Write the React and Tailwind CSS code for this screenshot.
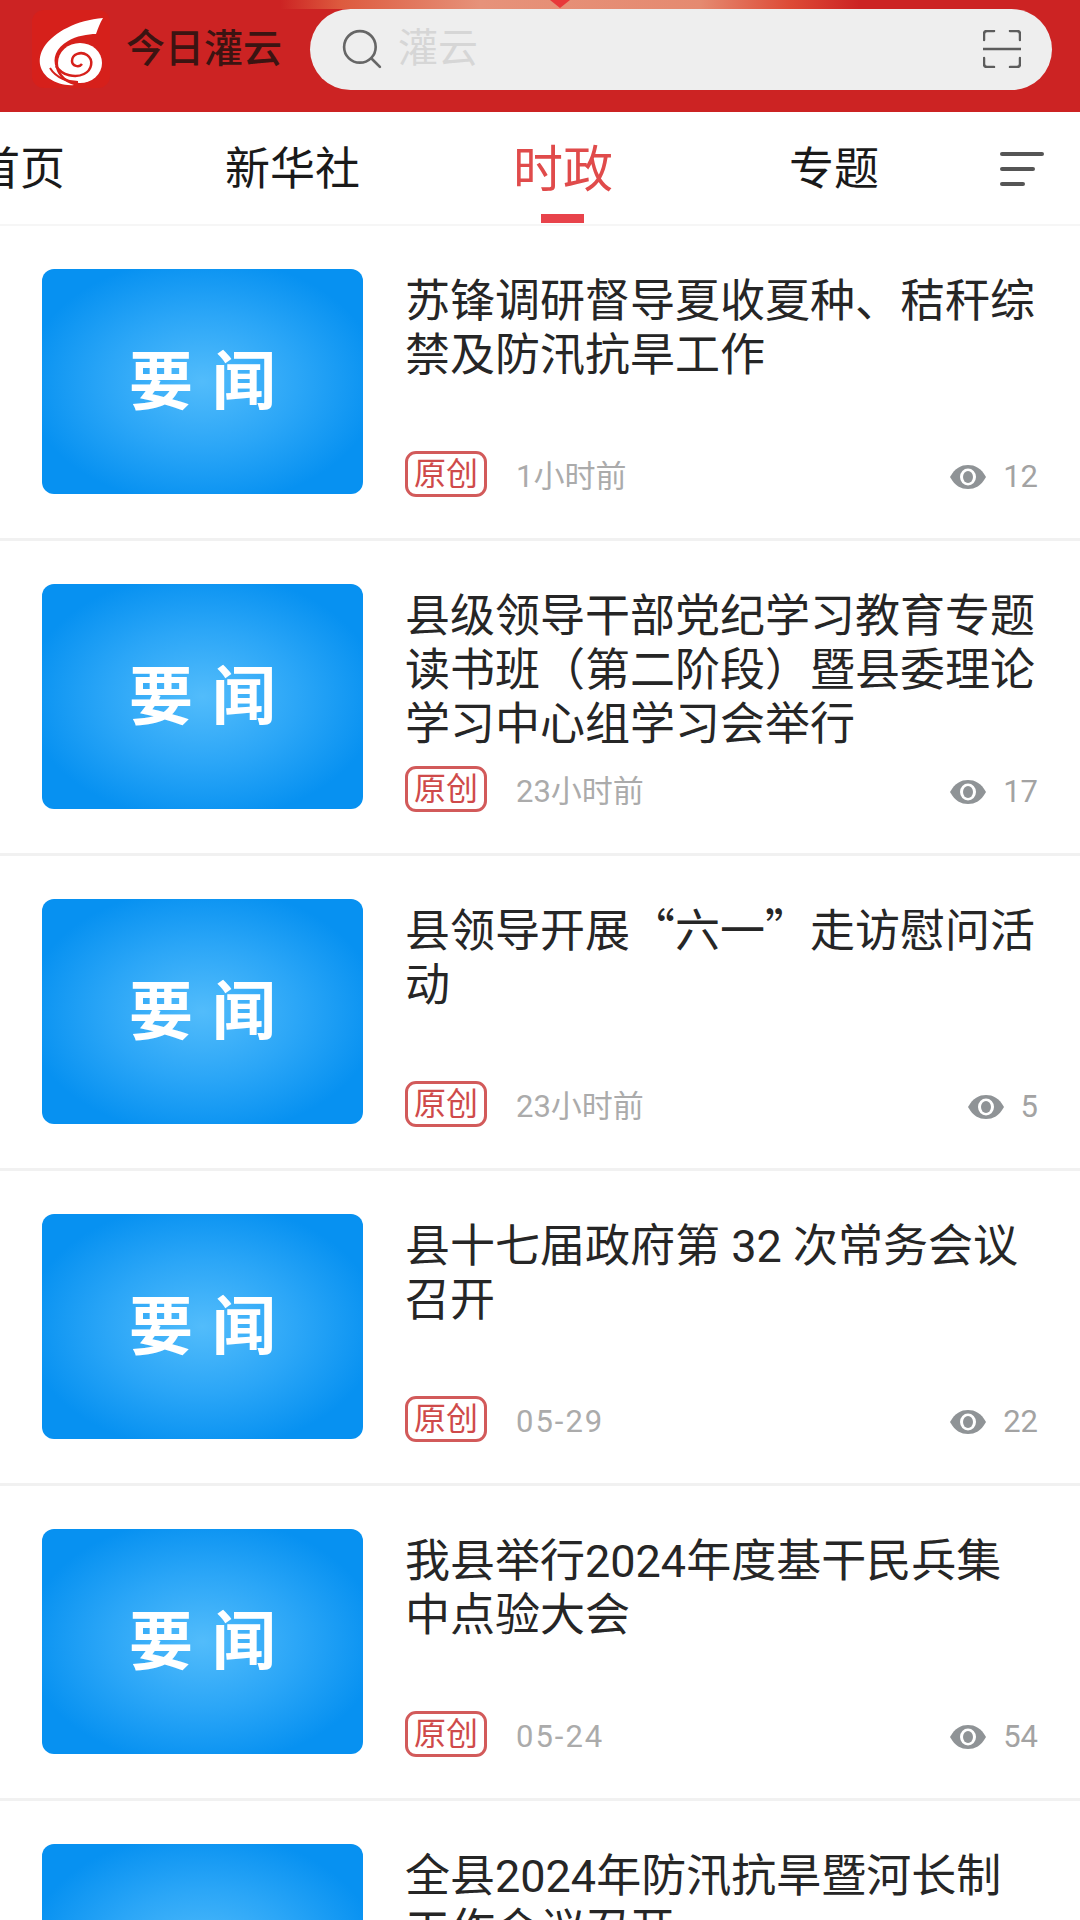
import React from "react";

const cjk = "font-['Roboto','Noto_Sans_CJK_SC',sans-serif]";
const quote = "leading-none font-['Noto_Sans_CJK_SC',sans-serif]";

const news = [
  { title: "苏锋调研督导夏收夏种、秸秆综禁及防汛抗旱工作", time: "1小时前", views: 12 },
  { title: "县级领导干部党纪学习教育专题读书班（第二阶段）暨县委理论学习中心组学习会举行", time: "23小时前", views: 17 },
  {
    title: (
      <>
        县领导开展<span className={quote}>“</span>六一<span className={quote}>”</span>走访慰问活动
      </>
    ),
    time: "23小时前",
    views: 5,
  },
  { title: "县十七届政府第 32 次常务会议召开", time: "05-29", views: 22 },
  { title: "我县举行2024年度基干民兵集中点验大会", time: "05-24", views: 54 },
  { title: "全县2024年防汛抗旱暨河长制工作会议召开", time: "05-24", views: 31 },
];

function Logo() {
  return (
    <div className="w-[78px] h-[78px] rounded-[12px] bg-[#d6201b] shrink-0">
      <svg viewBox="0 0 78 78" className="w-[78px] h-[78px]">
        <path
          d="M71 8 C45 10 22 22 12 37 C4 50 8 62 18 69 C24 73 34 76 42 75 C32 72 26 66 24 58 C20 48 24 38 36 31 C44 26 56 24 64 24 C66 18 68 13 71 8 Z"
          fill="#fff"
        />
        <ellipse cx="48" cy="53" rx="22" ry="20" fill="#fff" />
        <path d="M24 56 C30 66 44 68 52 64 C60 60 62 50 55 45 C49 41 40 44 40 51 C40 56 47 58 50 54" fill="none" stroke="#d6201b" strokeWidth="2.5" />
        <path d="M18 58 C24 68 36 72 46 72" fill="none" stroke="#d6201b" strokeWidth="2" />
      </svg>
    </div>
  );
}

function Eye() {
  return (
    <svg viewBox="0 0 38 26" className="w-[38px] h-[26px]">
      <path d="M1 13 C6 4 12 1 19 1 C26 1 32 4 37 13 C32 22 26 25 19 25 C12 25 6 22 1 13 Z" fill="#8f9396" />
      <ellipse cx="19" cy="13" rx="8" ry="8.5" fill="#fff" />
      <ellipse cx="19" cy="13" rx="5" ry="6" fill="#8f9396" />
    </svg>
  );
}

function NewsRow({ item }) {
  const isDate = item.time.includes("-");
  return (
    <article className="h-[315px] shrink-0 border-b-[3px] border-[#f1f1f1] pt-[43px] pl-[42px] pr-[42px] flex">
      <div className="w-[321px] h-[225px] shrink-0 rounded-[12px] pt-[3px] bg-[radial-gradient(ellipse_at_center,#52bcfb_0%,#2ba6f7_42%,#0791f1_78%)] flex items-center justify-center gap-[19px] text-white text-[64px] font-bold leading-none">
        <span>要</span>
        <span>闻</span>
      </div>
      <div className="ml-[42px] flex-1 h-[225px] flex flex-col justify-between">
        <h2 className="pt-[6px] text-[45px] leading-[54px] font-normal text-[#262626]">{item.title}</h2>
        <div className="flex items-center -mb-[3px]">
          <span className="w-[82px] h-[46px] rounded-[11px] border-[3px] border-[#d25a5a] text-[#cf4a4a] text-[32px] leading-none flex items-center justify-center">
            原创
          </span>
          <span className={`ml-[29px] pt-[5px] text-[31px] leading-none text-[#ababab] ${isDate ? "tracking-[2px]" : ""}`}>{item.time}</span>
          <div className="ml-auto pt-[5px] flex items-center gap-[16px] text-[31px] leading-none text-[#a3a3a3]">
            <Eye />
            <span>{item.views}</span>
          </div>
        </div>
      </div>
    </article>
  );
}

export default function App() {
  return (
    <div className={`w-[1080px] h-[1920px] overflow-hidden bg-white flex flex-col ${cjk}`}>
      <header className="relative h-[112px] shrink-0 bg-[#cc2323] bg-[linear-gradient(90deg,transparent_280px,#dd5a3e_340px,#e6927a_480px,#e58a70_700px,#dd4a36_790px,transparent_860px)] bg-[length:100%_9px] bg-no-repeat flex items-center pb-[14px] pl-[32px] pr-[28px]">
        <svg viewBox="0 0 20 8" className="absolute left-[550px] top-0 w-[20px] h-[8px]">
          <path d="M0 0 H20 L10 8 Z" fill="#e8383a" />
        </svg>
        <Logo />
        <span className="ml-[16px] text-[39px] font-medium text-[#3b1412] whitespace-nowrap">今日灌云</span>
        <div className="relative ml-[28px] flex-1 h-[81px] rounded-full bg-[#eeeeee] flex items-center pl-[32px] pr-[31px]">
          <svg viewBox="0 0 38 38" className="w-[40px] h-[40px]" fill="none" stroke="#666" strokeWidth="2.5" strokeLinecap="round">
            <circle cx="17" cy="17" r="15" />
            <path d="M28 28 L36 36" />
          </svg>
          <span className="ml-[16px] text-[40px] text-[#d6d6d6]">灌云</span>
          <svg viewBox="0 0 38 38" className="ml-auto w-[38px] h-[38px]" fill="none" stroke="#5c5c5c" strokeWidth="2.5" strokeLinecap="round">
            <path d="M1 10 V4 Q1 1 4 1 H11 M27 1 H34 Q37 1 37 4 V10 M1 28 V34 Q1 37 4 37 H11 M27 37 H34 Q37 37 37 34 V28" />
            <path d="M0 19 H38" />
          </svg>
        </div>
      </header>

      <nav className="h-[114px] shrink-0 pt-[3px] border-b-[2px] border-[#f6f6f6] flex items-center overflow-hidden text-[45px] text-[#1a1a1a] whitespace-nowrap">
        <span className="-ml-[25px]">首页</span>
        <span className="ml-[160px]">新华社</span>
        <div className="relative ml-[153px] mt-[2px] text-[50px] text-[#e04b4b]">
          时政
          <div className="absolute left-[28px] -bottom-[15px] w-[43px] h-[9px] bg-[#e8434b]" />
        </div>
        <span className="ml-[176px]">专题</span>
        <div className="ml-[121px] -mt-[2px] flex flex-col gap-[11px]">
          <div className="w-[44px] h-[4px] rounded-full bg-[#555]" />
          <div className="w-[35px] h-[4px] rounded-full bg-[#555]" />
          <div className="w-[25px] h-[4px] rounded-full bg-[#555]" />
        </div>
      </nav>

      <main className="flex flex-col">
        {news.map((item) => (
          <NewsRow key={item.time + item.views} item={item} />
        ))}
      </main>
    </div>
  );
}
